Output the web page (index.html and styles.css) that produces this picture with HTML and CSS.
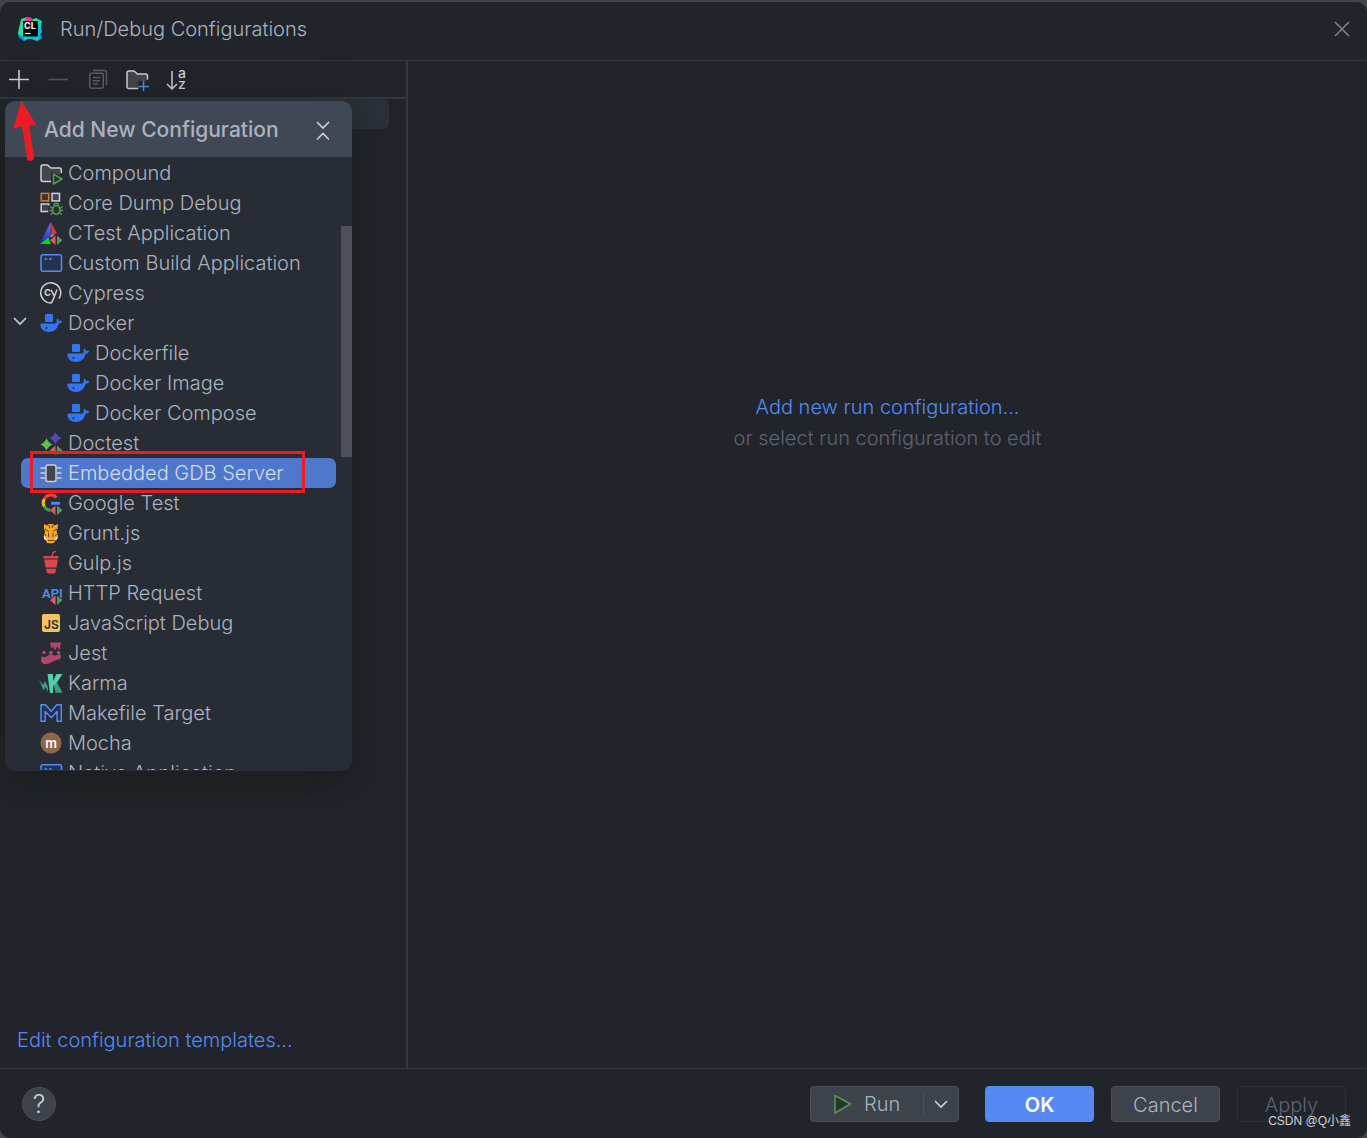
FILE: index.html
```html
<!DOCTYPE html>
<html lang="en">
<head>
<meta charset="utf-8">
<title>Run/Debug Configurations</title>
<link rel="stylesheet" href="styles.css">
</head>
<body>
<svg class="defs" aria-hidden="true">
  <defs>
    <linearGradient id="clion" x1="0" y1="0" x2="1" y2="1">
      <stop offset="0" stop-color="#21d789"/><stop offset="0.45" stop-color="#1de8a0"/><stop offset="0.75" stop-color="#0bb5e8"/><stop offset="1" stop-color="#21e88f"/>
    </linearGradient>
    <linearGradient id="ctest-blue" x1="0" y1="0" x2="0" y2="1">
      <stop offset="0" stop-color="#7c7ce0"/><stop offset="1" stop-color="#2222c8"/>
    </linearGradient>
    <symbol id="marks" viewBox="0 0 24 24">
      <path d="M16.500 14.500V24L11 19.200z" fill="#e05a62"/>
      <path d="M18 14.500V24l5.500-4.800z" fill="#57965c"/>
    </symbol>
    <symbol id="docker" viewBox="0 0 24 24">
      <path fill="#3574f0" d="M7 3h6a1 1 0 0 1 1 1v6a1 1 0 0 1-1 1H7a1 1 0 0 1-1-1V4a1 1 0 0 1 1-1zM2.500 12.500h13.600c1.200 0 1.800-.9 1.500-2.200-.2-1 .2-2 .8-2.800 1 .6 1.500 1.500 1.600 2.600 1-.4 2.300-.3 3.200.2-.5 1.500-1.800 2.400-3.500 2.500C18.300 18 15 21 9.800 21 4.500 21 1.500 18 1.400 13.600c0-.7.400-1.100 1.100-1.100z"/>
      <circle cx="7.500" cy="17" r="1" fill="#282c34"/>
    </symbol>
    <symbol id="app" viewBox="0 0 24 24">
      <rect x="2" y="3.750" width="20.500" height="16.500" rx="2" fill="#25324d" stroke="#548af7" stroke-width="1.500"/>
      <path d="M5.500 8h2.700M10 8h2.700" stroke="#548af7" stroke-width="1.500"/>
    </symbol>
    <symbol id="chevron" viewBox="0 0 14 14">
      <path d="M1 4l6 6 6-6" fill="none" stroke="currentColor" stroke-width="1.600"/>
    </symbol>
  </defs>
</svg>

<div class="dialog">
  <header class="titlebar">
    <svg class="icon" viewBox="0 0 24 24" aria-hidden="true">
      <path fill="url(#clion)" d="M3 2l6-2 4 3 5-2 6 3-1 6 1 5-2 3 2 3-5 3-6-2-3 0-4 2-5-4-1-4 1-5z"/>
      <path fill="#f5379b" d="M8 0l5 .5 2 4H6.500z"/>
      <path fill="#0f8fe8" d="M0 17l5 2.500 2 4-5-2zM23 17l-3 5 4-1z"/>
      <rect x="5" y="4" width="15" height="15.500" fill="#050807"/>
      <text class="logo-text" x="6" y="12">CL</text>
      <path d="M7 16.500h5.500" stroke="#fff" stroke-width="1.200"/>
    </svg>
    <h1>Run/Debug Configurations</h1>
    <button class="icon-button close" aria-label="Close">
      <svg class="icon" viewBox="0 0 24 24"><path d="M5 5l14 14M19 5L5 19" fill="none" stroke="#80848b" stroke-width="1.500"/></svg>
    </button>
  </header>

  <div class="content">
    <aside class="sidebar">
      <div class="toolbar">
        <button class="icon-button" aria-label="Add new configuration">
          <svg class="icon" viewBox="0 0 24 24"><path d="M3 12.500h20M13 3v19" stroke="#ced0d6" stroke-width="1.600"/></svg>
        </button>
        <button class="icon-button" aria-label="Remove configuration" disabled>
          <svg class="icon" viewBox="0 0 24 24"><path d="M2.500 12.500h19.500" stroke="#53565c" stroke-width="1.600"/></svg>
        </button>
        <button class="icon-button" aria-label="Copy configuration" disabled>
          <svg class="icon" viewBox="0 0 24 24" fill="none" stroke="#5a5d63" stroke-width="1.500"><rect x="3.750" y="6.250" width="13.500" height="15" rx="2"/><path d="M7 3.500h11.500a2 2 0 0 1 2 2V18M7 10.500h7M7 13.800h7M7 17h5"/></svg>
        </button>
        <button class="icon-button" aria-label="Create new folder">
          <svg class="icon" viewBox="0 0 24 24" fill="none" stroke-width="1.500"><path fill="#43454a" stroke="#ced0d6" d="M12.500 21.500H3a2 2 0 0 1-2-2V6a2 2 0 0 1 2-2h5l3.500 3H19.500a2 2 0 0 1 2 2V12.500"/><path d="M12.500 14h10v9h-10z" fill="#21252b"/><path d="M17.500 14v10M12.500 19.500h10.500" stroke="#548af7"/></svg>
        </button>
        <button class="icon-button" aria-label="Sort configurations">
          <svg class="icon" viewBox="0 0 24 24"><path d="M6 4v17.500M1 17l5 5 5-5" fill="none" stroke="#ced0d6" stroke-width="1.500"/><text class="sort-text" x="12" y="11">a</text><text class="sort-text" x="12" y="22">z</text></svg>
        </button>
      </div>
      <div class="config-list"><div class="config-row"></div></div>
      <a class="templates" href="#">Edit configuration templates...</a>

      <section class="popup" aria-label="Add New Configuration">
        <header class="popup-header">
          <h2>Add New Configuration</h2>
          <button class="icon-button" aria-label="Collapse all">
            <svg class="icon" viewBox="0 0 24 24"><path d="M6 4l6 6 6-6M6 21.500l6-6 6 6" fill="none" stroke="#ced0d6" stroke-width="1.600"/></svg>
          </button>
        </header>
        <ul class="types">
          <li><svg class="icon" viewBox="0 0 24 24"><path fill="#43454a" stroke="#ced0d6" stroke-width="1.500" d="M12.500 20.500H4a2 2 0 0 1-2-2V6a2 2 0 0 1 2-2h4.500l3.500 3h8.300a2 2 0 0 1 2 2v3"/><path d="M12 11l12 4v9H12z" fill="#282c34"/><path d="M14.500 13.200l8.500 4.800-8.500 5z" fill="#253627" stroke="#57965c" stroke-width="1.500" stroke-linejoin="round"/></svg>Compound</li>
          <li><svg class="icon" viewBox="0 0 24 24" fill="none" stroke-width="1.500"><rect x="2.200" y="2.400" width="7.500" height="7.500" fill="#45322b" stroke="#c77d55"/><rect x="13" y="2.400" width="7.500" height="7.500" fill="#43454a" stroke="#ced0d6"/><path fill="#43454a" stroke="#ced0d6" d="M9.700 14.500v-1.600H2.200v7.500h7"/><g stroke="#57965c"><ellipse cx="17.300" cy="18.800" rx="3.600" ry="4.400" fill="#253627"/><path d="M15 14.500a2.300 2.300 0 0 1 4.600 0M13.800 17.500l-2.600-1.800M13.600 19.500h-3M14.200 21.500l-2.600 2M20.800 17.500l2.600-1.800M21 19.500h3M20.400 21.500l2.600 2"/></g></svg>Core Dump Debug</li>
          <li><svg class="icon" viewBox="0 0 24 24"><path d="M11.700 1L1 22.500l10.500-6.500z" fill="url(#ctest-blue)"/><path d="M11.700 1l.8 11.500 7.500 3.500z" fill="#d13a3a"/><path d="M12.500 12.500l7 3.500H11z" fill="#8b8f96"/><path d="M1 23l8.500-6.500L12 23z" fill="#00e000"/><path d="M10 19l7.200-7 7.300 7-4 5h-6z" fill="#282c34"/><use href="#marks"/></svg>CTest Application</li>
          <li><svg class="icon"><use href="#app"/></svg>Custom Build Application</li>
          <li><svg class="icon" viewBox="0 0 24 24"><path d="M13 21.800A10 10 0 1 1 20 17.500M18 8.500l-4 10.500c-.5 1.500-1 2.500-2.500 2.700" fill="none" stroke="#ced0d6" stroke-width="1.500"/><text class="cy-text" x="5" y="15">c</text><path d="M12 8.800l3.200 6" stroke="#ced0d6" stroke-width="1.500"/></svg>Cypress</li>
          <li><button class="twisty" aria-label="Collapse Docker"><svg class="chevron"><use href="#chevron"/></svg></button><svg class="icon"><use href="#docker"/></svg>Docker</li>
          <li class="child"><svg class="icon"><use href="#docker"/></svg>Dockerfile</li>
          <li class="child"><svg class="icon"><use href="#docker"/></svg>Docker Image</li>
          <li class="child"><svg class="icon"><use href="#docker"/></svg>Docker Compose</li>
          <li><svg class="icon" viewBox="0 0 24 24"><path fill="#5447b8" d="M16.500 1q1.700 4.600 6.300 6.300-4.600 1.700-6.300 6.300-1.700-4.600-6.300-6.300 4.600-1.700 6.300-6.300z"/><path fill="#5cc445" d="M7.500 7.300q1.700 4.500 6.200 6.200-4.500 1.700-6.200 6.200-1.700-4.500-6.200-6.200 4.500-1.700 6.200-6.200z"/><use href="#marks"/></svg>Doctest</li>
          <li class="selected"><svg class="icon" viewBox="0 0 24 24"><path d="M1.500 7H6M1.500 12H6M1.500 17H6M18 7h4.500M18 12h4.500M18 17h4.500" stroke="#ced0d6" stroke-width="1.500"/><rect x="7" y="4" width="10" height="16.500" rx="2" fill="#43454a" stroke="#ced0d6" stroke-width="1.500"/></svg>Embedded GDB Server</li>
          <li><svg class="icon" viewBox="0 0 24 24" fill="none" stroke-width="3"><path stroke="#ea4335" d="M5.300 8A7.300 7.300 0 0 1 17.500 6.600"/><path stroke="#fbbc05" d="M5.300 15.500a7.300 7.300 0 0 1 0-7.500"/><path stroke="#34a853" d="M11.500 19.200a7.300 7.300 0 0 1-6.200-3.700"/><path stroke="#4285f4" d="M12 12.300h9"/><use href="#marks"/></svg>Google Test</li>
          <li><svg class="icon" viewBox="0 0 24 24"><path fill="#f9a72b" d="M5 3l3 1.500L9.500 3h4.500l1.500 1.500L19 3l-.5 5-1 2 1.500 5-2.500 2.500-1 4-3 1-4.500-.5-1.500-4L4.700 15l1.500-5L5 8z"/><path fill="none" stroke="#693d12" d="M9.800 4l1 3M14 4l-1 3M6 8l4 2.500M18 8l-4 2.500M9.500 12v4M14 12v4M9 19.500h6M6 13l1 2M17.500 13l-1 2"/><path fill="#fff" d="M4.500 15l2.500 2 .5 2.500-2-1zM19 15l-2.500 2-.5 2.500 2-1z"/></svg>Grunt.js</li>
          <li><svg class="icon" viewBox="0 0 24 24" fill="#db4848"><path d="M4.500 5h15v2.500h-15zM5.200 8.500h13.600l-1.200 8H6.600zM7 17.800h10l-.6 4.200q-4.400 1.500-8.700 0z"/><path d="M13 5l1-3.500 3-1.200" fill="none" stroke="#db4848" stroke-width="1.300"/></svg>Gulp.js</li>
          <li><svg class="icon" viewBox="0 0 24 24"><text class="api-text" x="3" y="17">API</text><path d="M10.500 19l5.500-5.500h2.500l5.500 5.500-5 5h-4z" fill="#282c34"/><use href="#marks"/></svg>HTTP Request</li>
          <li><svg class="icon" viewBox="0 0 24 24"><rect x="3" y="3" width="18" height="18" rx="2" fill="#f2c55c"/><text class="js-text" x="5" y="18">JS</text></svg>JavaScript Debug</li>
          <li><svg class="icon" viewBox="0 0 24 24" fill="#b0476a"><path d="M11 1.500h11L20.500 9l-2.500-3.500L16 9.500 13.700 5.500 12.500 8z"/><circle cx="5" cy="11.500" r="1.800"/><circle cx="12" cy="11.500" r="1.800"/><circle cx="19.500" cy="11.500" r="1.800"/><path d="M2.500 15q1.500 1.500 4 1 2.500-1 5-3.500 3 3.500 9.500.5 2 2.500 0 5-3 .8-6 2-4 3-8.500 3.300Q2 23 2 19z"/></svg>Jest</li>
          <li><svg class="icon" viewBox="0 0 24 24"><path fill="#3f9c84" d="M0 8.500l4 5.500 2-4 3 6v5L6.500 16l-2 3.500zM14 12.500l4-1 5.700 10.200h-7z"/><path fill="#56cfae" d="M8.500 3h5.500v7l3.500-7h6l-5.500 8.500-4 3.500v7H11z"/></svg>Karma</li>
          <li><svg class="icon" viewBox="0 0 24 24"><path d="M2 3.750h4.500l5.700 6.500 5.600-6.500h4.500v16.500h-4.200V10.500l-5.900 6.300-6-6.300v9.750H2z" fill="#25324d" stroke="#548af7" stroke-width="1.500" stroke-linejoin="round"/></svg>Makefile Target</li>
          <li><svg class="icon" viewBox="0 0 24 24"><circle cx="12" cy="12" r="10.500" fill="#8d6748"/><text class="mocha-text" x="12" y="16.500">m</text></svg>Mocha</li>
          <li><svg class="icon"><use href="#app"/></svg>Native Application</li>
        </ul>
        <div class="scroll-thumb"></div>
        <div class="highlight"></div>
      </section>

      <svg class="pointer" viewBox="0 0 24 60" aria-hidden="true"><path fill="#ed1c24" d="M8.500 0L24 25l-8-1.500 5 32.500q0 4-3.500 4T14 57L9 25l-9 3z"/></svg>
    </aside>

    <main class="details">
      <div class="empty">
        <a href="#">Add new run configuration...</a>
        <p>or select run configuration to edit</p>
      </div>
    </main>
  </div>

  <footer class="footer">
    <button class="help" aria-label="Help">?</button>
    <div class="run-group">
      <button class="run"><svg class="icon" viewBox="0 0 24 24"><path d="M5 3.500l15.500 8.500L5 21z" fill="#253627" stroke="#57965c" stroke-width="1.500" stroke-linejoin="round"/></svg>Run</button>
      <button class="run-more" aria-label="More run options"><svg class="chevron"><use href="#chevron"/></svg></button>
    </div>
    <button class="btn primary">OK</button>
    <button class="btn">Cancel</button>
    <button class="btn apply" disabled>Apply</button>
  </footer>
  <span class="watermark">CSDN @Q小鑫</span>
</div>
</body>
</html>
```

FILE: styles.css
```css
* {
  box-sizing: border-box;
}

body {
  margin: 0;
  padding-top: 2px;
  min-height: 100vh;
  display: flex;
  background: #43454a;
  color: #abb2bf;
  font: 300 20px/30px Inter, "Noto Sans CJK SC", sans-serif;
}

h1,
h2,
p,
ul {
  margin: 0;
  padding: 0;
}

h1 {
  font-size: 20px;
  font-weight: 300;
}

a {
  color: #568af2;
  text-decoration: none;
}

button {
  font: inherit;
  color: inherit;
  margin: 0;
  padding: 0;
  border: 0;
  background: none;
}

.defs {
  position: absolute;
  width: 0;
  height: 0;
}

.icon {
  display: block;
  flex: none;
  width: 24px;
  height: 24px;
}

.icon-button {
  width: 24px;
  height: 24px;
}

.chevron {
  display: block;
  width: 14px;
  height: 14px;
  color: #ced0d6;
}

.dialog {
  position: relative;
  flex: 1;
  display: flex;
  flex-direction: column;
  background: #21252b;
  border-radius: 10px;
}

.titlebar {
  display: flex;
  align-items: center;
  gap: 18px;
  height: 59px;
  padding: 0 13px 4px 18px;
  border-bottom: 1px solid #333841;
}

.close {
  margin-left: auto;
}

.content {
  flex: 1;
  display: flex;
}

.sidebar {
  position: relative;
  flex: none;
  width: 408px;
  display: flex;
  flex-direction: column;
  border-right: 2px solid #333841;
}

.toolbar {
  display: flex;
  align-items: center;
  gap: 16px;
  height: 38px;
  padding-left: 6px;
  border-bottom: 2px solid #333841;
}

.config-list {
  flex: 1;
  padding: 0 17px;
}

.config-row {
  height: 30px;
  border-radius: 6px;
  background: #2c313a;
}

.templates {
  padding: 0 17px 13px;
}

.popup {
  position: absolute;
  top: 40px;
  left: 5px;
  width: 347px;
  height: 670px;
  overflow: hidden;
  display: flex;
  flex-direction: column;
  border-radius: 10px;
  background: #282c34;
}

.sidebar::after {
  content: "";
  position: absolute;
  top: 40px;
  left: 5px;
  width: 347px;
  height: 670px;
  border-radius: 10px;
  box-shadow: 0 12px 40px 4px rgba(24, 26, 24, 0.6);
  pointer-events: none;
}

.popup-header {
  flex: none;
  display: flex;
  align-items: center;
  justify-content: space-between;
  height: 56px;
  padding: 2px 17px 0 39px;
  background: #414855;
}

.popup-header h2 {
  font-size: 21px;
  font-weight: 500;
}

.types {
  flex: 1;
  min-height: 0;
  overflow: hidden;
  margin: 1px 0;
  list-style: none;
}

.types li {
  position: relative;
  display: flex;
  align-items: center;
  gap: 5px;
  height: 30px;
  margin: 0 16px;
  padding-left: 18px;
  border-radius: 7px;
}

.types .child {
  padding-left: 45px;
}

.types .selected {
  background: #4d78cc;
  color: #d7dae0;
}

.twisty {
  position: absolute;
  top: 6px;
  left: -8px;
}

.scroll-thumb {
  position: absolute;
  top: 125px;
  right: 0;
  width: 11px;
  height: 231px;
  background: #4d5058;
}

.highlight {
  position: absolute;
  top: 350px;
  left: 25px;
  width: 275px;
  height: 42px;
  border: 3px solid #ed1c24;
}

.pointer {
  position: absolute;
  top: 40px;
  left: 13px;
  width: 24px;
  height: 60px;
}

.details {
  flex: 1;
  display: grid;
  grid-template-rows: 7fr auto 13fr;
}

.empty {
  grid-row: 2;
  text-align: center;
}

.empty p {
  margin-top: 1px;
  color: #5c6370;
}

.footer {
  display: flex;
  align-items: center;
  height: 70px;
  padding: 0 21px 0 22px;
  border-top: 1px solid #333841;
}

.help {
  width: 34px;
  height: 34px;
  margin-right: auto;
  border: 1px solid #4a505b;
  border-radius: 50%;
  background: #3d424b;
  color: #ced0d6;
  font-size: 25px;
}

.run-group {
  display: flex;
  align-items: center;
  height: 36px;
  margin-right: 26px;
  border: 1px solid #4a505b;
  border-radius: 4px;
  background: #3d424b;
}

.run {
  display: flex;
  align-items: center;
  gap: 10px;
  width: 112px;
  padding: 1px 0 0 19px;
}

.run-more {
  height: 24px;
  padding: 0 10px;
  border-left: 1px solid #4a505b;
}

.btn {
  width: 109px;
  height: 36px;
  padding-top: 2px;
  border: 1px solid #4a505b;
  border-radius: 4px;
  background: #3d424b;
}

.btn + .btn {
  margin-left: 17px;
}

.primary {
  border-color: #568af2;
  background: #568af2;
  color: #fff;
  font-weight: 600;
}

.apply {
  border-color: #2c3038;
  background: none;
  color: #5c6370;
}

.watermark {
  position: absolute;
  right: 16px;
  bottom: 7px;
  color: #d0d2d6;
  font: 12px/20px "Liberation Sans", "Noto Sans CJK SC", sans-serif;
}

.logo-text {
  fill: #fff;
  font: 700 9px Inter, sans-serif;
}

.sort-text {
  fill: #ced0d6;
  font: 500 14px Inter, sans-serif;
}

.cy-text {
  fill: #ced0d6;
  font: 600 12px Inter, sans-serif;
}

.api-text {
  fill: #548af7;
  font: 600 13px Roboto, sans-serif;
}

.js-text {
  fill: #282c34;
  font: 600 12px Inter, sans-serif;
}

.mocha-text {
  fill: #fff;
  font: 600 13px Inter, sans-serif;
  text-anchor: middle;
}
```
